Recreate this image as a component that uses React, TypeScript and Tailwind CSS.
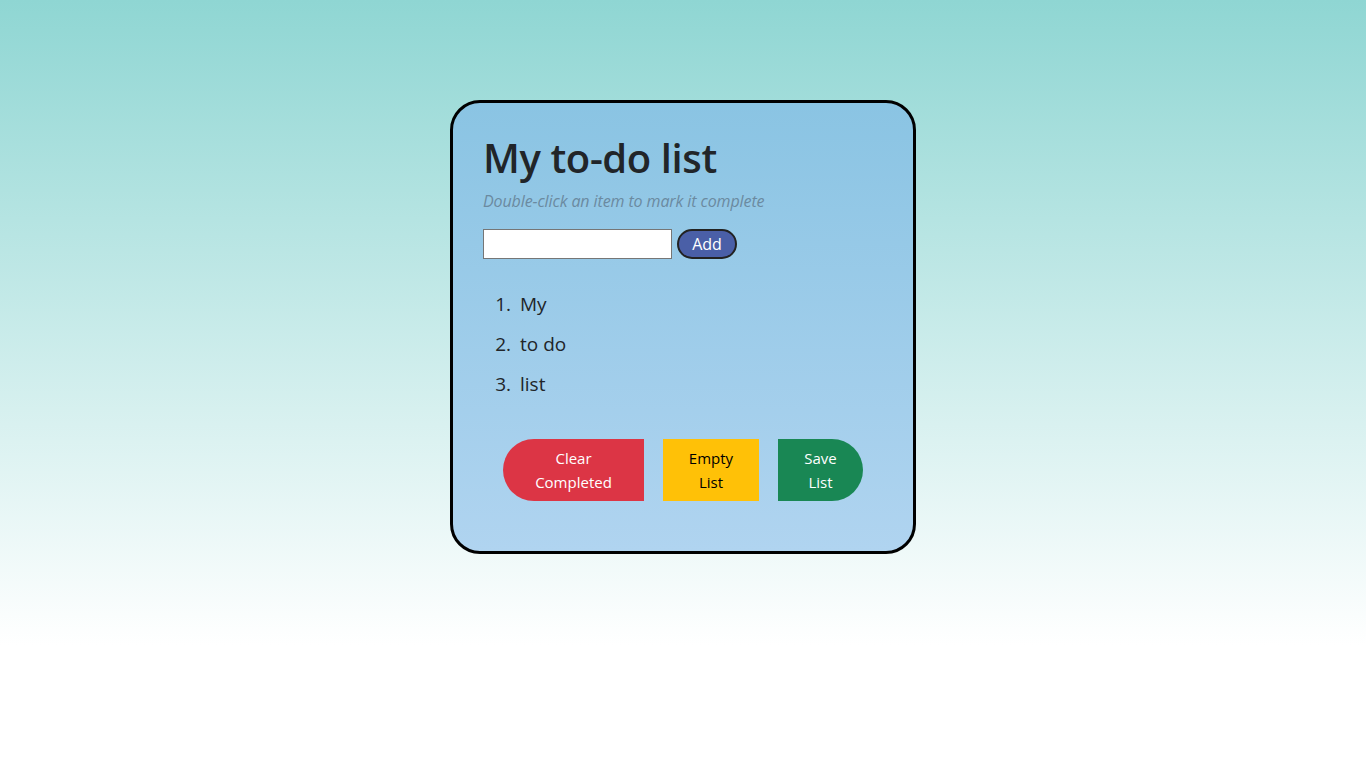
import React, { useState } from 'react';

const items = ['My', 'to do', 'list'];

export default function App() {
  const [text, setText] = useState('');

  return (
    <div
      className="min-h-screen w-full bg-[linear-gradient(to_bottom,#8fd6d3_0%,#ffffff_84%)] pt-[100px] font-['Open_Sans','Noto_Sans',sans-serif] text-[#212529]"
    >
      <div className="mx-auto w-[466px] h-[454px] rounded-[30px] border-[3px] border-black bg-[linear-gradient(to_bottom,#8ac4e3,#b0d4f0)] pl-[30px] pr-[30px] pt-[31px]">
        <h1 className="text-[40px] leading-[1.2] font-semibold tracking-[-0.4px]">My to-do list</h1>
        <p className="mt-[7px] text-[16px] italic text-[#6b8aa0] tracking-[-0.1px]">Double-click an item to mark it complete</p>

        <div className="mt-[16px] flex items-center gap-[5px]">
          <input
            value={text}
            onChange={e => setText(e.target.value)}
            className="w-[189px] h-[30px] border border-[#767676] bg-white px-1 text-base outline-none"
          />
          <button className="h-[30px] w-[60px] rounded-full border-2 border-[#222] bg-[#4a5fa7] text-[16px] text-white">
            Add
          </button>
        </div>

        <ol className="mt-[25px] list-decimal pl-[33px] text-[19px]">
          {items.map(item => (
            <li key={item} className="h-[40px] leading-[40px] pl-[4px]">
              {item}
            </li>
          ))}
        </ol>

        <div className="mt-[35px] flex justify-center gap-[19px] text-[15px] leading-[24px]">
          <button className="w-[141px] h-[62px] rounded-l-full bg-[#dc3545] text-white">
            Clear<br />Completed
          </button>
          <button className="w-[96px] h-[62px] bg-[#ffc107] text-black">
            Empty<br />List
          </button>
          <button className="w-[85px] h-[62px] rounded-r-full bg-[#198754] text-white">
            Save<br />List
          </button>
        </div>
      </div>
    </div>
  );
}
